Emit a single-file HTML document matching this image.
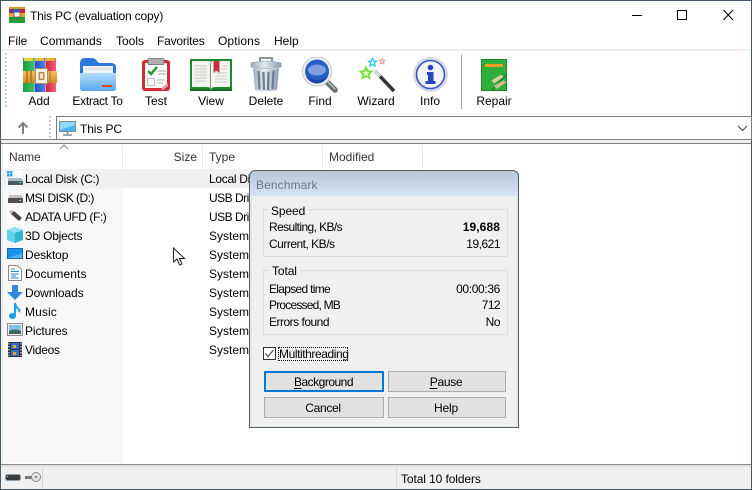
<!DOCTYPE html>
<html><head><meta charset="utf-8"><style>
html,body{margin:0;padding:0;width:752px;height:490px;overflow:hidden;background:#fff}
body{font:12px/16px "Liberation Sans",sans-serif;color:#000;position:relative}
.t,.b,svg{position:absolute}
.t{white-space:nowrap;height:16px;line-height:16px}
.c{text-align:center;transform:translateX(-50%)}
.r{text-align:right}
.h{color:#333}
u{text-underline-offset:2px}
</style></head><body>
<!-- window frame -->
<div class="b" style="left:0;top:0;width:752px;height:1px;background:#44586a"></div>
<div class="b" style="left:0;top:0;width:1px;height:490px;background:#44586a"></div>
<div class="b" style="left:751px;top:0;width:1px;height:490px;background:#44586a"></div>
<div class="b" style="left:0;top:489px;width:752px;height:1px;background:#44586a"></div>
<!-- title -->
<svg style="left:9px;top:7px" width="16" height="16" viewBox="0 0 16 16"><rect width="5.400" height="16" fill="#7a2f8f"/><rect x="5.300" width="5.400" height="16" fill="#2060c8"/><rect x="10.600" width="5.400" height="16" fill="#d02040"/><rect y="10" width="16" height="6" fill="#2c9a3a"/><rect y="0" width="16" height="2" fill="#c8a020"/><rect y="6" width="16" height="4" fill="#e8a030"/><rect x="5" y="5" width="6" height="5" fill="#fff" stroke="#555" stroke-width=".8"/></svg>
<div class="t" style="left:30px;top:8px;letter-spacing:-.17px">This PC (evaluation copy)</div>
<svg style="left:630px;top:9px" width="110" height="13" viewBox="0 0 110 13" fill="none" stroke="#000"><path d="M2 6.500H12"/><path d="M47.500 1.500H56.500V10.500H47.500Z" stroke-width="1"/><path d="M93.500 1L103 11M103 1L93.500 11"/></svg>
<!-- menu -->
<div class="t" style="left:8px;top:33px">File</div>
<div class="t" style="left:40px;top:33px;letter-spacing:.05px">Commands</div>
<div class="t" style="left:116px;top:33px">Tools</div>
<div class="t" style="left:157px;top:33px;letter-spacing:-.2px">Favorites</div>
<div class="t" style="left:218px;top:33px;letter-spacing:.1px">Options</div>
<div class="t" style="left:274px;top:33px">Help</div>
<div class="b" style="left:1px;top:49px;width:750px;height:2px;background:#f0f0f0"></div>
<!-- toolbar grip -->
<div class="b" style="left:5px;top:53px;width:2px;height:56px;background:repeating-linear-gradient(#ccc 0 2px,#fff 2px 4px)"></div>
<defs></defs>
<!-- Add -->
<svg style="left:23px;top:58px" width="34" height="34" viewBox="0 0 34 34"><defs><linearGradient id="g1" x1="0" x2="1"><stop offset="0" stop-color="#1e9c44"/><stop offset="1" stop-color="#3cc060"/></linearGradient><linearGradient id="g2" x1="0" x2="1"><stop offset="0" stop-color="#1f4fc4"/><stop offset="1" stop-color="#4a80e8"/></linearGradient><linearGradient id="g3" x1="0" x2="1"><stop offset="0" stop-color="#d0203c"/><stop offset="1" stop-color="#f0607c"/></linearGradient><linearGradient id="gb" x1="0" y1="0" x2="0" y2="1"><stop offset="0" stop-color="#f4c060"/><stop offset="1" stop-color="#d08a28"/></linearGradient></defs><rect width="11" height="34" fill="url(#g1)"/><rect x="11.500" width="10.500" height="34" fill="url(#g2)"/><rect x="22.500" width="10.500" height="34" fill="url(#g3)"/><rect x="1" width="9" height="3" fill="#e8d040"/><rect x="12" width="9" height="3" fill="#e8c030"/><rect x="23" width="9" height="3" fill="#e8b030"/><rect y="13" width="34" height="12" fill="url(#gb)"/><path d="M4 13V25M8 13V25" stroke="#a87020" stroke-width="1.500"/><path d="M27 13V25" stroke="#a87020"/><rect x="12.500" y="10.500" width="12" height="15" fill="#f6f2e4" stroke="#a89060"/><rect x="15.500" y="14" width="6" height="8" fill="#b89050"/><rect x="17" y="15.500" width="3" height="5" fill="#f0e8d0"/></svg>
<div class="t c" style="left:39px;top:93px">Add</div>
<!-- Extract -->
<svg style="left:80px;top:58px" width="36" height="34" viewBox="0 0 36 34"><defs><linearGradient id="f1" x1="0" y1="0" x2="0" y2="1"><stop offset="0" stop-color="#b4dcfc"/><stop offset="1" stop-color="#5aa8f0"/></linearGradient></defs><path d="M0 6Q0 0 5 0H12Q15 0 17 3L19 5H31Q36 5 36 9V30Q36 33 32 33H4Q0 33 0 30Z" fill="#2a78de"/><rect x="3" y="8" width="30" height="10" fill="#f0f3f6"/><path d="M6 11H31" stroke="#a8b2bc" stroke-dasharray="1 1"/><path d="M0 15H36V30Q36 33 32 33H4Q0 33 0 30Z" fill="url(#f1)"/><rect x="22" y="27" width="10" height="2" fill="#e8402c"/></svg>
<div class="t c" style="left:97.500px;top:93px;letter-spacing:-.3px">Extract To</div>
<!-- Test -->
<svg style="left:142px;top:58px" width="28" height="33" viewBox="0 0 28 33"><rect y="2" width="28" height="31" rx="3" fill="#d42a30"/><path d="M3 5H25V26L20 30H3Z" fill="#fbfbfb"/><rect x="6" y=".5" width="16" height="6" rx="1" fill="#b0b0b0" stroke="#666" stroke-width=".8"/><path d="M6 13L9 16L15 9" stroke="#279a36" stroke-width="2.500" fill="none"/><path d="M16 13H24M16 16H24" stroke="#aaa"/><rect x="5.500" y="20.500" width="7" height="7" fill="none" stroke="#bbb"/><path d="M15 22H23M15 25H21" stroke="#bbb"/><path d="M19 31L26 26V28L21 32Z" fill="#e8b8b8"/></svg>
<div class="t c" style="left:156px;top:93px">Test</div>
<!-- View -->
<svg style="left:190px;top:59px" width="42" height="33" viewBox="0 0 42 33"><rect width="42" height="32" fill="#1f8a2c"/><path d="M2 2H19Q21 2 21 4V30Q20 28 17 28H2Z" fill="#f2f2ee"/><path d="M40 2H23Q21 2 21 4V30Q22 28 25 28H40Z" fill="#f7f7f3"/><path d="M5 7H17M5 10H17M5 13H17M5 16H17M5 19H17M5 22H17M25 14H37M25 17H37M25 20H37M25 23H37M32 7H37M32 10H37" stroke="#c8c8c8"/><path d="M23.500 2H29.500V14L26.500 11.500L23.500 14Z" fill="#c9303a"/><path d="M0 30H42V32H0Z" fill="#136a20"/><path d="M20.500 4V31" stroke="#888"/></svg>
<div class="t c" style="left:211px;top:93px">View</div>
<!-- Delete -->
<svg style="left:250px;top:56px" width="32" height="37" viewBox="0 0 32 37"><defs><linearGradient id="d1" x1="0" x2="1"><stop offset="0" stop-color="#9eacbc"/><stop offset=".45" stop-color="#e4eaf0"/><stop offset="1" stop-color="#8a9aac"/></linearGradient></defs><path d="M10 6V2H22V6" fill="none" stroke="#8a94a0" stroke-width="2"/><path d="M1 7Q16 3 31 7V11Q16 14 1 11Z" fill="url(#d1)" stroke="#8090a2" stroke-width=".6"/><path d="M3 12Q16 15 29 12L27 34Q16 37 5 34Z" fill="url(#d1)"/><path d="M8.500 15L9.500 33M13.500 16L14 34M18.500 16L18 34M23.500 15L22.500 33" stroke="#6c7e92" stroke-width="2.200"/></svg>
<div class="t c" style="left:266px;top:93px">Delete</div>
<!-- Find -->
<svg style="left:302px;top:57px" width="37" height="36" viewBox="0 0 37 36"><path d="M24 24L33 33" stroke="#666e78" stroke-width="5.500" stroke-linecap="round"/><path d="M25 24L33 32" stroke="#c0c6cc" stroke-width="1.500" stroke-linecap="round"/><circle cx="15" cy="14.500" r="14.500" fill="#f0f2f4" stroke="#c0c6cc"/><circle cx="15" cy="14.500" r="12" fill="#2a5cc8"/><ellipse cx="15" cy="13" rx="9" ry="5.500" fill="#7f9fe0"/><path d="M4 18Q15 28 26 18Q23 26 15 26.500Q7 26 4 18Z" fill="#1c46a8"/></svg>
<div class="t c" style="left:320px;top:93px">Find</div>
<!-- Wizard -->
<svg style="left:358px;top:57px" width="38" height="36" viewBox="0 0 38 36"><path d="M17 14L36 34" stroke="#333" stroke-width="3.500"/><path d="M16.500 13.500L22 19.500" stroke="#d8d8d8" stroke-width="3.500"/><path d="M8 10.500L9.700 14L13.500 14.500L10.800 17L11.500 21L8 19L4.500 21L5.200 17L2.500 14.500L6.300 14Z" fill="#ddfcc0" stroke="#70e040" stroke-width="1.800"/><path d="M14.500 1.500L15.700 4L18.500 4.300L16.400 6.200L17 9L14.500 7.600L12 9L12.600 6.200L10.500 4.300L13.300 4Z" fill="#f0fcff" stroke="#28c8e8" stroke-width="1.300"/><path d="M24 1L25 3L27.200 3.200L25.600 4.700L26 7L24 5.900L22 7L22.400 4.700L20.800 3.200L23 3Z" fill="#fce0e0" stroke="#ee9090" stroke-width=".8"/></svg>
<div class="t c" style="left:376px;top:93px">Wizard</div>
<!-- Info -->
<svg style="left:413px;top:57px" width="35" height="35" viewBox="0 0 35 35"><circle cx="17.500" cy="17.500" r="17.500" fill="#d8dce2"/><circle cx="17.500" cy="17.500" r="14" fill="#f2f3f6" stroke="#3557c4" stroke-width="1.600"/><circle cx="17.500" cy="10.500" r="2.800" fill="#2a45c0"/><path d="M14 15H20.500V24H22.500V27H12.500V24H15V18H14Z" fill="#2a45c0"/></svg>
<div class="t c" style="left:430px;top:93px">Info</div>
<div class="b" style="left:461px;top:55px;width:1px;height:54px;background:#a8a8a8"></div>
<!-- Repair -->
<svg style="left:481px;top:59px" width="27" height="32" viewBox="0 0 27 32"><rect width="26" height="32" fill="#2fae3c"/><rect x=".5" y=".5" width="25" height="31" fill="none" stroke="#1c8c2a"/><rect x="4" y="5" width="18" height="3" fill="#f0a020"/><path d="M11 31L26 15" stroke="#1b7a28" stroke-width="1.200"/><path d="M10.500 21.500L20 15.500L22.500 18L13 24.500Z" fill="#d8d0a0"/><path d="M13 27L22.500 21L25 23.500L15.500 30Z" fill="#c8c090"/></svg>
<div class="t c" style="left:494px;top:93px">Repair</div>
<!-- address bar -->
<div class="b" style="left:49px;top:116px;width:2px;height:24px;background:repeating-linear-gradient(#ccc 0 2px,#fff 2px 4px)"></div>
<svg style="left:16px;top:121px" width="14" height="14" viewBox="0 0 14 14"><path d="M7 13V2M2.500 6.500L7 2L11.500 6.500" fill="none" stroke="#808080" stroke-width="2"/></svg>
<div class="b" style="left:56px;top:116px;width:694px;height:22px;border:1px solid #7a7a7a"></div>
<svg style="left:59px;top:121px" width="17" height="15" viewBox="0 0 17 15"><rect x=".5" y=".5" width="16" height="10" fill="#46b6f0" stroke="#7f8c94"/><path d="M1 1H16V4L1 9Z" fill="#8ed8f8"/><path d="M8.500 11V13M4 14H13" stroke="#7f8c94" stroke-width="1.500"/></svg>
<div class="t" style="left:80px;top:121px;letter-spacing:-.1px">This PC</div>
<svg style="left:737px;top:125px" width="11" height="7" viewBox="0 0 11 7"><path d="M1 1L5.500 5.500L10 1" fill="none" stroke="#555" stroke-width="1.200"/></svg>
<!-- list frame -->
<div class="b" style="left:1px;top:140px;width:750px;height:3px;background:#f0f0f0"></div>
<div class="b" style="left:0;top:139px;width:752px;height:1px;background:#7f7f7f"></div>
<div class="b" style="left:1px;top:143px;width:750px;height:1px;background:#7f7f7f"></div>
<div class="b" style="left:1px;top:144px;width:2px;height:320px;background:#f0f0f0"></div>
<!-- Name column bg -->
<div class="b" style="left:3px;top:170px;width:120px;height:293px;background:#f7f7f7"></div>
<div class="b" style="left:3px;top:169px;width:247px;height:19px;background:#f0f0f0"></div>
<!-- headers -->
<div class="b" style="left:122px;top:145px;width:1px;height:24px;background:#e5e5e5"></div>
<div class="b" style="left:202px;top:145px;width:1px;height:24px;background:#e5e5e5"></div>
<div class="b" style="left:322px;top:145px;width:1px;height:24px;background:#e5e5e5"></div>
<div class="b" style="left:422px;top:145px;width:1px;height:24px;background:#e5e5e5"></div>
<svg style="left:59px;top:144px" width="10" height="6" viewBox="0 0 10 6"><path d="M1 5L5 1L9 5" fill="none" stroke="#888"/></svg>
<div class="t h" style="left:9px;top:149px;letter-spacing:-.1px">Name</div>
<div class="t h r" style="left:140px;width:57px;top:149px">Size</div>
<div class="t h" style="left:209px;top:149px">Type</div>
<div class="t h" style="left:329px;top:149px">Modified</div>
<!-- rows -->
<div class="t" style="left:25px;top:171px;letter-spacing:-.3px">Local Disk (C:)</div>
<div class="t" style="left:25px;top:190px;letter-spacing:-.55px">MSI DISK (D:)</div>
<div class="t" style="left:25px;top:209px;letter-spacing:-.45px">ADATA UFD (F:)</div>
<div class="t" style="left:25px;top:228px;letter-spacing:-.2px">3D Objects</div>
<div class="t" style="left:25px;top:247px;letter-spacing:-.1px">Desktop</div>
<div class="t" style="left:25px;top:266px;letter-spacing:.1px">Documents</div>
<div class="t" style="left:25px;top:285px;letter-spacing:-.1px">Downloads</div>
<div class="t" style="left:25px;top:304px;letter-spacing:.1px">Music</div>
<div class="t" style="left:25px;top:323px;letter-spacing:-.1px">Pictures</div>
<div class="t" style="left:25px;top:342px;letter-spacing:-.3px">Videos</div>
<div class="t" style="left:209px;top:171px;letter-spacing:-.3px">Local Disk</div>
<div class="t" style="left:209px;top:190px;letter-spacing:-.5px">USB Drive</div>
<div class="t" style="left:209px;top:209px;letter-spacing:-.5px">USB Drive</div>
<div class="t" style="left:209px;top:228px">System folder</div>
<div class="t" style="left:209px;top:247px">System folder</div>
<div class="t" style="left:209px;top:266px">System folder</div>
<div class="t" style="left:209px;top:285px">System folder</div>
<div class="t" style="left:209px;top:304px">System folder</div>
<div class="t" style="left:209px;top:323px">System folder</div>
<div class="t" style="left:209px;top:342px">System folder</div>
<!-- row icons -->
<svg style="left:7px;top:170px" width="16" height="16" viewBox="0 0 16 16"><rect width="16" height="16" fill="#f8f8f8"/><path d="M0 1H2.500V3.500H0ZM3 1H5.500V3.500H3ZM0 4H2.500V6.500H0ZM3 4H5.500V6.500H3Z" fill="#1ea0f0"/><path d="M2 8H14L16 12V15H1V12Z" fill="#4a5a66"/><rect x="1" y="8" width="14" height="3" fill="#a9bcc8"/><rect x="12" y="12" width="2" height="1" fill="#7fe86a"/></svg>
<svg style="left:7px;top:189px" width="16" height="16" viewBox="0 0 16 16"><path d="M3 6H14L16 10V14H1V10Z" fill="#4f4f4f"/><rect x="2" y="6" width="13" height="3" fill="#c4c4c4"/><rect x="12" y="11" width="2" height="1" fill="#7fe86a"/></svg>
<svg style="left:7px;top:208px" width="16" height="16" viewBox="0 0 16 16"><rect width="16" height="16" fill="#fff"/><path d="M4 6L7 3L15 10L12 13Z" fill="#444"/><path d="M4 6L7 3L4 2L2 4Z" fill="#bbb"/></svg>
<svg style="left:7px;top:227px" width="16" height="16" viewBox="0 0 16 16"><path d="M8 0L16 3V13L8 16L0 13V3Z" fill="#2fb8d0"/><path d="M0 3L8 6L16 3L8 0Z" fill="#8ce4f0"/><path d="M8 6V16L0 13V3Z" fill="#60d4e4"/></svg>
<svg style="left:7px;top:246px" width="16" height="16" viewBox="0 0 16 16"><rect y="2" width="16" height="11" fill="#1e90e8"/><rect x=".5" y="2.500" width="15" height="10" fill="none" stroke="#1868b0"/><path d="M1 12L15 7V12Z" fill="#50b4f4"/></svg>
<svg style="left:8px;top:265px" width="14" height="16" viewBox="0 0 14 16"><path d="M.5 .5H9.500L13.500 4.500V15.500H.5Z" fill="#fff" stroke="#8a8a8a"/><path d="M3 4H7M3 6.500H11M3 9H11M3 11H8M3 13H11" stroke="#2a88d0"/></svg>
<svg style="left:7px;top:284px" width="16" height="16" viewBox="0 0 16 16"><path d="M5 1H11V8H16L8 16L0 8H5Z" fill="#3088e0"/></svg>
<svg style="left:9px;top:303px" width="12" height="16" viewBox="0 0 12 16"><ellipse cx="3.500" cy="13" rx="3.500" ry="3" fill="#18a0e8"/><path d="M5 13V0H7Q8 4 11 6Q12 8 10 10Q9 6 7 5V13Z" fill="#18a0e8"/></svg>
<svg style="left:7px;top:323px" width="16" height="14" viewBox="0 0 16 14"><rect x=".5" y=".5" width="15" height="12" fill="#f0f0f0" stroke="#8a8a8a"/><rect x="2" y="2" width="12" height="9" fill="#88c0e0"/><path d="M2 8Q8 5 14 8V11H2Z" fill="#3a6a60"/></svg>
<svg style="left:8px;top:342px" width="14" height="15" viewBox="0 0 14 15"><rect width="14" height="15" fill="#303030"/><path d="M1 1V14M13 1V14" stroke="#ddd" stroke-dasharray="1.500 1.500" stroke-width="1.200"/><rect x="3" y="1" width="8" height="6" fill="#3070d0"/><rect x="3" y="8" width="8" height="6" fill="#3070d0"/><rect x="5" y="3" width="3" height="3" fill="#e8a030"/><rect x="5" y="10" width="3" height="3" fill="#e8a030"/></svg>
<!-- cursor -->
<svg style="left:172px;top:247px" width="14" height="20" viewBox="0 0 14 20"><path d="M1.500 1V15L5 12L7.500 18L10 17L7.500 11.500H12.500Z" fill="#fff" stroke="#222"/></svg>
<!-- status bar -->
<div class="b" style="left:1px;top:464px;width:750px;height:1px;background:#8a8a8a"></div>
<div class="b" style="left:1px;top:465px;width:750px;height:24px;background:#f0f0f0"></div>
<div class="b" style="left:1px;top:465px;width:750px;height:2px;background:#e2e2e2"></div>
<svg style="left:5px;top:472px" width="36" height="12" viewBox="0 0 36 12"><rect x=".5" y="2.500" width="15" height="6" rx="2" fill="#3a3a3a" stroke="#8aa0b0"/><rect x="2" y="4" width="1" height="1" fill="#ddd"/><path d="M20 5.500H31" stroke="#777" stroke-width="3"/><circle cx="31" cy="5" r="4.500" fill="#e8e8e8" stroke="#888"/><circle cx="31" cy="5" r="1.500" fill="#999"/></svg>
<div class="b" style="left:42px;top:468px;width:1px;height:20px;background:#d8d8d8"></div>
<div class="b" style="left:396px;top:468px;width:1px;height:20px;background:#d8d8d8"></div>
<div class="t" style="left:401px;top:471px;letter-spacing:-.1px">Total 10 folders</div>
<!-- dialog -->
<div class="b" style="left:249px;top:170px;width:268px;height:256px;border:1px solid #5a5a5a;border-radius:6px 6px 0 0;background:linear-gradient(#b7c7d7,#d5e3f2 25px,#dce9f5 25px)"></div>
<div class="b" style="left:252px;top:196px;width:264px;height:230px;background:#f0f0f0"></div>
<div class="t" style="left:256px;top:177px;color:#6d7680;letter-spacing:.1px">Benchmark</div>
<!-- groups -->
<div class="b" style="left:263px;top:209px;width:243px;height:46px;border:1px solid #dcdcdc"></div>
<div class="t" style="left:268px;top:203px;padding:0 3px;background:#f0f0f0;letter-spacing:-.1px">Speed</div>
<div class="t" style="left:269px;top:219px;letter-spacing:-.6px">Resulting, KB/s</div>
<div class="t r" style="left:400px;width:100px;top:219px;font-weight:bold;letter-spacing:.1px">19,688</div>
<div class="t" style="left:269px;top:236px;letter-spacing:-.5px">Current, KB/s</div>
<div class="t r" style="left:400px;width:100px;top:236px;letter-spacing:-.5px">19,621</div>
<div class="b" style="left:263px;top:270px;width:243px;height:63px;border:1px solid #dcdcdc"></div>
<div class="t" style="left:269px;top:263px;padding:0 3px;background:#f0f0f0;letter-spacing:-.1px">Total</div>
<div class="t" style="left:269px;top:281px;letter-spacing:-.7px">Elapsed time</div>
<div class="t r" style="left:400px;width:100px;top:281px;letter-spacing:-.35px">00:00:36</div>
<div class="t" style="left:269px;top:297px;letter-spacing:-.8px">Processed, MB</div>
<div class="t r" style="left:400px;width:100px;top:297px;letter-spacing:-.6px">712</div>
<div class="t" style="left:269px;top:314px;letter-spacing:-.5px">Errors found</div>
<div class="t r" style="left:400px;width:100px;top:314px;letter-spacing:-.5px">No</div>
<!-- checkbox -->
<div class="b" style="left:263px;top:347px;width:11px;height:11px;border:1px solid #333;background:#fff"></div>
<svg style="left:264px;top:348px" width="11" height="11" viewBox="0 0 11 11"><path d="M1.500 5.500L4 8.500L9.500 2" fill="none" stroke="#555" stroke-width="1.300"/></svg>
<div class="b" style="left:278px;top:347px;width:68px;height:12px;border:1px dotted #000"></div>
<div class="t" style="left:279px;top:346px;letter-spacing:-.42px">Multithreading</div>
<!-- buttons -->
<div class="b" style="left:264px;top:371px;width:116px;height:17px;border:2px solid #0078d7;background:#e1e1e1"></div>
<div class="t c" style="left:323.500px;top:374px;letter-spacing:-.5px"><u>B</u>ackground</div>
<div class="b" style="left:388px;top:371px;width:116px;height:19px;border:1px solid #adadad;background:#e1e1e1"></div>
<div class="t c" style="left:446px;top:374px;letter-spacing:-.3px"><u>P</u>ause</div>
<div class="b" style="left:264px;top:397px;width:118px;height:19px;border:1px solid #adadad;background:#e1e1e1"></div>
<div class="t c" style="left:323px;top:400px;letter-spacing:-.3px">Cancel</div>
<div class="b" style="left:388px;top:397px;width:116px;height:19px;border:1px solid #adadad;background:#e1e1e1"></div>
<div class="t c" style="left:446px;top:400px;letter-spacing:-.2px">Help</div>
</body></html>
